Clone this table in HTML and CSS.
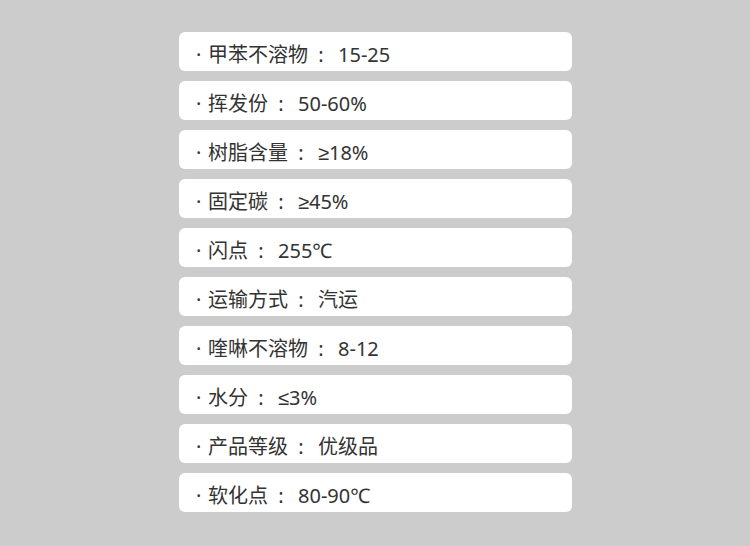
FILE: index.html
```html
<!DOCTYPE html>
<html lang="zh-CN">
<head>
<meta charset="utf-8">
<link rel="stylesheet" href="styles.css">
</head>
<body>
<ul class="spec-list">
  <li class="spec-item"><span class="dot">·</span><span class="label">甲苯不溶物</span><span class="colon">:</span><span class="value">15-25</span></li>
  <li class="spec-item"><span class="dot">·</span><span class="label">挥发份</span><span class="colon">:</span><span class="value">50-60%</span></li>
  <li class="spec-item"><span class="dot">·</span><span class="label">树脂含量</span><span class="colon">:</span><span class="value">≥18%</span></li>
  <li class="spec-item"><span class="dot">·</span><span class="label">固定碳</span><span class="colon">:</span><span class="value">≥45%</span></li>
  <li class="spec-item"><span class="dot">·</span><span class="label">闪点</span><span class="colon">:</span><span class="value">255℃</span></li>
  <li class="spec-item"><span class="dot">·</span><span class="label">运输方式</span><span class="colon">:</span><span class="value">汽运</span></li>
  <li class="spec-item"><span class="dot">·</span><span class="label">喹啉不溶物</span><span class="colon">:</span><span class="value">8-12</span></li>
  <li class="spec-item"><span class="dot">·</span><span class="label">水分</span><span class="colon">:</span><span class="value">≤3%</span></li>
  <li class="spec-item"><span class="dot">·</span><span class="label">产品等级</span><span class="colon">:</span><span class="value">优级品</span></li>
  <li class="spec-item"><span class="dot">·</span><span class="label">软化点</span><span class="colon">:</span><span class="value">80-90℃</span></li>
</ul>
</body>
</html>
```
FILE: styles.css
```css
html, body {
  margin: 0;
  padding: 0;
  background: #cccccc;
}
body {
  width: 750px;
  height: 546px;
  overflow: hidden;
}
.spec-list {
  list-style: none;
  margin: 0;
  padding: 32px 0 0 179px;
  display: flex;
  flex-direction: column;
  gap: 10px;
}
.spec-item {
  width: 393px;
  height: 39px;
  box-sizing: border-box;
  background: #ffffff;
  border-radius: 6px;
  padding: 6px 0 0 17px;
  display: flex;
  align-items: center;
  font-family: "Noto Sans", "Liberation Sans", "Noto Sans CJK SC", sans-serif;
  font-size: 20px;
  line-height: 33px;
  color: #333333;
  white-space: pre;
}
.dot {
  width: 12px;
}
.colon {
  width: 26px;
  padding-right: 4px;
  text-align: center;
}
```
